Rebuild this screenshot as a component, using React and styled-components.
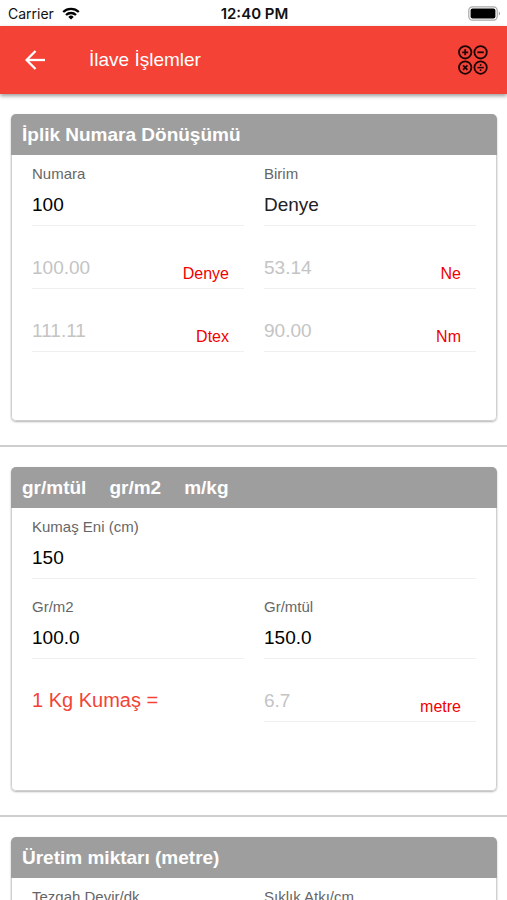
import React, { useState } from 'react';
import styled, { createGlobalStyle } from 'styled-components';

const App = () => {
    const [numara, setNumara] = useState('100');
    const [birim, setBirim] = useState('Denye');
    const [en, setEn] = useState('150');
    const [grm2, setGrm2] = useState('100.0');
    const [grmtul, setGrmtul] = useState('150.0');
    const [devir, setDevir] = useState('');
    const [siklik, setSiklik] = useState('');

    return (
        <Screen>
            <GlobalStyle />
            <StatusBar>
                <Carrier>
                    Carrier
                    <WifiIcon />
                </Carrier>
                <Clock>12:40 PM</Clock>
                <Battery>
                    <BatteryIcon />
                </Battery>
            </StatusBar>
            <Header>
                <IconButton aria-label="Geri">
                    <BackIcon />
                </IconButton>
                <Title>İlave İşlemler</Title>
                <IconButton aria-label="Hesap">
                    <CalcIcon />
                </IconButton>
            </Header>
            <Content>
                <Section>
                    <Card>
                        <CardHeader>
                            <CardTitle>İplik Numara Dönüşümü</CardTitle>
                        </CardHeader>
                        <CardBody>
                            <Field id="numara" label="Numara" value={numara} onChange={setNumara} />
                            <div>
                                <Label htmlFor="birim">Birim</Label>
                                <Line>
                                    <Select id="birim" value={birim} onChange={e => setBirim(e.target.value)}>
                                        <option>Denye</option>
                                        <option>Dtex</option>
                                        <option>Ne</option>
                                        <option>Nm</option>
                                    </Select>
                                </Line>
                            </div>
                            <Result id="denye" unit="Denye" value="100.00" />
                            <Result id="ne" unit="Ne" value="53.14" />
                            <Result id="dtex" unit="Dtex" value="111.11" />
                            <Result id="nm" unit="Nm" value="90.00" />
                        </CardBody>
                    </Card>
                </Section>
                <Section>
                    <Card>
                        <CardHeader>
                            <CardTitle>gr/mtül</CardTitle>
                            <CardTitle>gr/m2</CardTitle>
                            <CardTitle>m/kg</CardTitle>
                        </CardHeader>
                        <CardBody>
                            <Wide>
                                <Field id="en" label="Kumaş Eni (cm)" value={en} onChange={setEn} />
                            </Wide>
                            <Field id="grm2" label="Gr/m2" value={grm2} onChange={setGrm2} />
                            <Field id="grmtul" label="Gr/mtül" value={grmtul} onChange={setGrmtul} />
                            <Caption>1 Kg Kumaş =</Caption>
                            <Result id="metre" unit="metre" value="6.7" />
                        </CardBody>
                    </Card>
                </Section>
                <Section>
                    <Card>
                        <CardHeader>
                            <CardTitle>Üretim miktarı (metre)</CardTitle>
                        </CardHeader>
                        <CardBody>
                            <Field id="devir" label="Tezgah Devir/dk" value={devir} onChange={setDevir} />
                            <Field id="siklik" label="Sıklık Atkı/cm" value={siklik} onChange={setSiklik} />
                        </CardBody>
                    </Card>
                </Section>
            </Content>
        </Screen>
    )
}

const Field = ({ id, label, value, onChange }) => (
    <div>
        <Label htmlFor={id}>{label}</Label>
        <Line>
            <Input id={id} value={value} onChange={e => onChange(e.target.value)} />
        </Line>
    </div>
)

const Result = ({ id, unit, value }) => (
    <Line>
        <Input id={id} value={value} disabled />
        <Unit htmlFor={id}>{unit}</Unit>
    </Line>
)

const WifiIcon = () => (
    <svg width="18" height="13" viewBox="0 0 18 13" fill="none" stroke="#000" strokeWidth="2.3">
        <path d="M1.2 5A11.2 11.2 0 0 1 16.8 5" />
        <path d="M4 8A7.2 7.2 0 0 1 14 8" />
        <path d="M9 12.6L6.3 9.9A3.9 3.9 0 0 1 11.7 9.9Z" fill="#000" stroke="none" />
    </svg>
)

const BatteryIcon = () => (
    <svg width="33" height="15" viewBox="0 0 33 15">
        <rect x="0.8" y="0.8" width="28.4" height="13.4" rx="3.6" fill="#fff" stroke="#a8a8a8" strokeWidth="1.2" />
        <rect x="2.6" y="2.6" width="24.8" height="9.8" rx="2" fill="#000" />
        <path d="M30.8 5.4C32.4 6.2 32.4 8.8 30.8 9.6Z" fill="#999" />
    </svg>
)

const BackIcon = () => (
    <svg width="20" height="20" viewBox="0 0 20 20" fill="none" stroke="#fff" strokeWidth="2.3">
        <path d="M20 10H2" />
        <path d="M10.5 1L1.6 10L10.5 19" />
    </svg>
)

const CalcIcon = () => (
    <svg width="30" height="30" viewBox="0 0 30 30" fill="none" stroke="#1c0404" strokeWidth="1.8">
        <circle cx="7.2" cy="7.3" r="6.2" />
        <circle cx="22.6" cy="7.3" r="6.2" />
        <circle cx="7.2" cy="22.6" r="6.2" />
        <circle cx="22.6" cy="22.6" r="6.2" />
        <path d="M4.2 7.3H10.2M7.2 4.3V10.3" />
        <path d="M19.4 7.3H25.8" />
        <path d="M5 20.4L9.4 24.8M9.4 20.4L5 24.8" />
        <path d="M19.4 22.6H25.8" strokeWidth="1.5" />
        <circle cx="22.6" cy="20" r="0.9" fill="#1c0404" stroke="none" />
        <circle cx="22.6" cy="25.2" r="0.9" fill="#1c0404" stroke="none" />
    </svg>
)

const GlobalStyle = createGlobalStyle`
* {
    box-sizing:border-box;
}
body {
    margin:0;
    background:#fff;
    font-family:"Liberation Sans", Arial, sans-serif;
}
input, select, button {
    font-family:inherit;
}
`;

const Screen = styled.div`
height:100vh;
display:flex;
flex-direction:column;
`;

const StatusBar = styled.div`
flex:none;
display:grid;
grid-template-columns:1fr auto 1fr;
align-items:center;
height:26px;
padding:0 6px 0 8px;
font-family:Inter, "Liberation Sans", sans-serif;
font-size:14px;
color:#111;
`;

const Carrier = styled.div`
display:flex;
align-items:center;
gap:8px;
`;

const Clock = styled.div`
font-size:15px;
font-weight:600;
`;

const Battery = styled.div`
display:flex;
justify-content:flex-end;
`;

const Header = styled.header`
flex:none;
display:flex;
align-items:center;
height:68px;
padding:0 14px 0 15px;
background:#f44336;
box-shadow:0 2px 4px rgba(0,0,0,0.4);
z-index:1;
`;

const IconButton = styled.button`
display:flex;
align-items:center;
justify-content:center;
width:40px;
height:40px;
padding:0;
border:none;
background:none;
cursor:pointer;
`;

const Title = styled.h1`
flex:1;
margin:0;
padding-left:34px;
font-size:19px;
font-weight:400;
color:#fff;
`;

const Content = styled.main`
flex:1;
min-height:0;
overflow-y:auto;
scrollbar-width:none;
`;

const Section = styled.section`
padding:20px 10px 24px 11px;
border-bottom:2px solid #cecece;
`;

const Card = styled.div`
border-radius:5px;
box-shadow:0 1px 2px rgba(0,0,0,0.3);
overflow:hidden;
`;

const CardHeader = styled.div`
display:flex;
gap:23px;
height:41px;
align-items:center;
padding:0 11px;
background:#9e9e9e;
`;

const CardTitle = styled.h2`
margin:0;
font-size:19px;
font-weight:700;
color:#fff;
`;

const CardBody = styled.div`
display:grid;
grid-template-columns:repeat(2, minmax(0, 1fr));
gap:20px;
padding:11px 20px 68px;
border:1px solid #cfcfcf;
border-top:none;
border-radius:0 0 5px 5px;
`;

const Wide = styled.div`
grid-column:1 / -1;
`;

const Label = styled.label`
display:block;
padding-bottom:2px;
font-size:15px;
line-height:15px;
color:#666;
`;

const Line = styled.div`
display:flex;
height:43px;
border-bottom:1px solid #f0f0f0;
`;

const Input = styled.input`
flex:1;
width:0;
min-width:0;
padding:2px 0 0;
border:none;
outline:none;
background:none;
font-size:19px;
color:#000;
&:disabled {
    color:#c4c4c4;
}
`;

const Select = styled.select`
flex:1;
min-width:0;
padding:0;
border:none;
outline:none;
background:none;
appearance:none;
font-size:19px;
color:#222;
`;

const Unit = styled.label`
align-self:flex-end;
padding:0 15px 5px 0;
font-size:16px;
line-height:18px;
color:#f00000;
`;

const Caption = styled.div`
font-size:20px;
line-height:43px;
color:#f44336;
`;

export default App;
